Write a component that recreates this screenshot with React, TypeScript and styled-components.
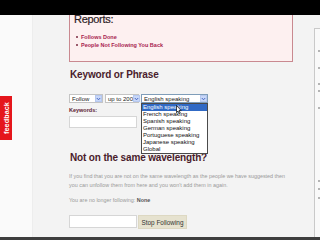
import styled, { createGlobalStyle } from "styled-components";

const GlobalStyle = createGlobalStyle`
  html, body {
    margin: 0;
    padding: 0;
    background: #f3f3f3;
  }
  * { box-sizing: border-box; }
`;

const Page = styled.div`
  width: 320px;
  height: 240px;
  overflow: hidden;
  display: grid;
  grid-template-columns: 33px 1fr 6px;
  grid-template-rows: 15px 1fr 3px;
  font-family: "Liberation Sans", Arial, sans-serif;
  background: #f3f3f3;
  position: relative;
`;

const TopBar = styled.div`
  grid-column: 1 / -1;
  background: #000;
`;

const BottomBar = styled.div`
  grid-column: 1 / -1;
  background: #3e3e3e;
`;

const LeftStrip = styled.div`
  background: #fafafa;
  border-right: 1px solid #ededed;
`;

const Feedback = styled.div`
  position: absolute;
  left: 0;
  top: 96px;
  width: 12px;
  height: 44px;
  background: #e5161c;
  color: #fff;
  font-weight: bold;
  font-size: 7.2px;
  display: flex;
  align-items: center;
  justify-content: center;
  writing-mode: vertical-rl;
  transform: rotate(180deg);
  letter-spacing: 0.1px;
`;

const Main = styled.div`
  overflow: hidden;
  padding-left: 36px;
  display: flex;
  flex-direction: column;
  align-items: flex-start;
`;

const ReportsBox = styled.div`
  margin-top: -2px;
  width: 224px;
  background: #fdf0f0;
  border: 1px solid #c98990;
  padding: 1px 0 12px 4px;
`;

const ReportsTitle = styled.h3`
  margin: 0;
  font-size: 11px;
  line-height: 8px;
  font-weight: normal;
  letter-spacing: -0.3px;
  color: #2c2024;
  -webkit-text-stroke: 0.2px #2c2024;
`;

const LinkList = styled.ul`
  list-style: none;
  margin: 10px 0 0;
  padding: 0 0 0 2px;
`;

const LinkItem = styled.li`
  display: flex;
  align-items: center;
  gap: 3px;
  font-size: 5.5px;
  line-height: 8px;
  font-weight: bold;
  color: #a8224f;

  &::before {
    content: "";
    width: 2px;
    height: 2px;
    background: #7a2a40;
    border-radius: 50%;
  }
`;

const Heading = styled.h2<{ $top: number }>`
  margin: ${(p) => p.$top}px 0 0 1px;
  font-size: 10px;
  line-height: 10px;
  font-weight: bold;
  letter-spacing: -0.15px;
  color: #4a1c2c;
`;

const FormRow = styled.div`
  margin-top: 14.5px;
  display: flex;
  gap: 2px;
  height: 9px;
`;

const Select = styled.div<{ $w: number; $active?: boolean }>`
  position: relative;
  width: ${(p) => p.$w}px;
  height: 9px;
  background: #fff;
  border: 1px solid ${(p) => (p.$active ? "#7f9db9" : "#c4c4c4")};
  display: flex;
  align-items: center;
  justify-content: space-between;
  padding-left: 2px;
  font-size: 6px;
  color: #222;
  white-space: nowrap;
`;

const Arrow = styled.span`
  width: 7px;
  height: 7px;
  background: #c8d7f8;
  border: 1px solid #b6c8ef;
  display: flex;
  align-items: center;
  justify-content: center;
`;

const Dropdown = styled.div`
  position: absolute;
  left: -1px;
  top: 8px;
  width: 67px;
  background: #fff;
  border: 1px solid #4a4a4a;
  z-index: 3;
`;

const Option = styled.div<{ $selected?: boolean }>`
  height: 7px;
  line-height: 7px;
  padding-left: 1px;
  font-size: 6px;
  color: ${(p) => (p.$selected ? "#fff" : "#111")};
  background: ${(p) => (p.$selected ? "#316ac5" : "transparent")};
`;

const Cursor = styled.svg`
  position: absolute;
  left: 34px;
  top: 1px;
  z-index: 4;
`;

const Label = styled.div`
  margin-top: 3px;
  font-size: 5.5px;
  line-height: 8px;
  font-weight: bold;
  color: #5c2232;
`;

const TextInput = styled.div<{ $top: number; $h: number }>`
  margin-top: ${(p) => p.$top}px;
  width: 68px;
  height: ${(p) => p.$h}px;
  background: #fff;
  border: 1px solid #d6d6d6;
`;

const Para = styled.p<{ $top: number }>`
  margin: ${(p) => p.$top}px 0 0;
  font-size: 5.4px;
  line-height: 9px;
  color: #9a9a9a;

  b {
    color: #555;
  }
`;

const StopRow = styled.div`
  margin-top: 10px;
  display: flex;
  gap: 1px;
  align-items: flex-start;
`;

const StopButton = styled.div`
  width: 49px;
  height: 14px;
  background: #e6e2cf;
  border: 1px solid #ddd8c2;
  display: flex;
  align-items: center;
  justify-content: center;
  font-size: 6.4px;
  color: #333;
`;

const Sidebar = styled.div`
  margin-top: 13px;
  background: #f9f9f9;
  border-left: 1px solid #c9c9c9;
  border-top: 1px solid #c9c9c9;
  padding-left: 3px;
  overflow: hidden;
`;

const SideMark = styled.div<{ $top: number }>`
  margin-top: ${(p) => p.$top}px;
  width: 3px;
  height: 2px;
  background: #b4b4b4;
`;

const Chevron = () => (
  <svg width="5" height="4" viewBox="0 0 5 4">
    <path d="M0.8 1 L2.5 2.8 L4.2 1" stroke="#3b5fc0" strokeWidth="0.9" fill="none" />
  </svg>
);

const languages = [
  "English speaking",
  "French speaking",
  "Spanish speaking",
  "German speaking",
  "Portuguese speaking",
  "Japanese speaking",
  "Global",
];

const sideMarks = [21, 15, 14, 5, 15, 71, 6, 7];

export default function App() {
  return (
    <>
      <GlobalStyle />
      <Page>
        <TopBar />
        <LeftStrip />
        <Main>
          <ReportsBox>
            <ReportsTitle>Reports:</ReportsTitle>
            <LinkList>
              <LinkItem>Follows Done</LinkItem>
              <LinkItem>People Not Following You Back</LinkItem>
            </LinkList>
          </ReportsBox>

          <Heading $top={7.5}>Keyword or Phrase</Heading>
          <FormRow>
            <Select $w={34}>
              Follow
              <Arrow><Chevron /></Arrow>
            </Select>
            <Select $w={34}>
              up to 200
              <Arrow><Chevron /></Arrow>
            </Select>
            <Select $w={67} $active>
              English speaking
              <Arrow><Chevron /></Arrow>
              <Dropdown>
                {languages.map((l, i) => (
                  <Option key={l} $selected={i === 0}>{l}</Option>
                ))}
                <Cursor width="6" height="9" viewBox="0 0 6 9">
                  <path d="M0.5 0.5 L0.5 7.5 L2 6 L3.2 8.5 L4.2 8 L3 5.6 L5.2 5.6 Z" fill="#fff" stroke="#000" strokeWidth="0.7" />
                </Cursor>
              </Dropdown>
            </Select>
          </FormRow>
          <Label>Keywords:</Label>
          <TextInput $top={2} $h={12} />

          <Heading $top={24.5}>Not on the same wavelength?</Heading>
          <Para $top={9}>
            If you find that you are not on the same wavelength as the people we have suggested then
            <br />
            you can unfollow them from here and you won't add them in again.
          </Para>
          <Para $top={6.5}>
            You are no longer following: <b>None</b>
          </Para>
          <StopRow>
            <TextInput $top={0} $h={13} />
            <StopButton>Stop Following</StopButton>
          </StopRow>
        </Main>
        <Sidebar>
          {sideMarks.map((m, i) => (
            <SideMark key={i} $top={m} />
          ))}
        </Sidebar>
        <BottomBar />
        <Feedback>feedback</Feedback>
      </Page>
    </>
  );
}
